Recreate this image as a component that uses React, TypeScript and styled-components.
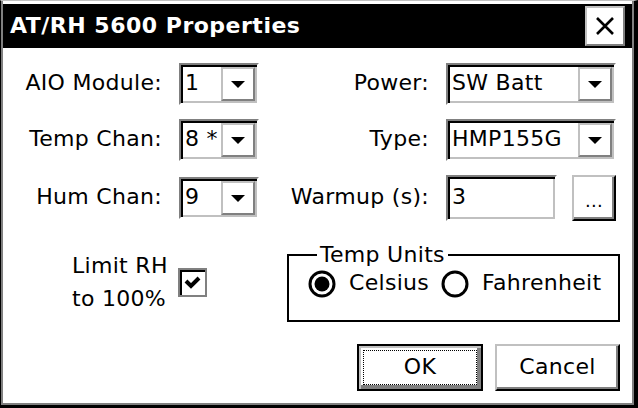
import React from "react";
import styled, {createGlobalStyle, css} from "styled-components";

const GRAY = "#808080";
const SILVER = "#c0c0c0";

const GlobalStyle = createGlobalStyle`
    html, body {
        margin: 0;
        padding: 0;
        background: #fff;
    }
    body {
        font-family: "DejaVu Sans", "Liberation Sans", sans-serif;
        font-size: 22px;
        letter-spacing: 0.3px;
        color: #000;
    }
    * {
        box-sizing: border-box;
    }
`;

const sunken = css`
    border: 2px solid;
    border-color: ${GRAY} #fff #fff ${GRAY};
    box-shadow: inset 2px 2px 0 #000, inset -2px -2px 0 ${SILVER};
`;

const raised = css`
    border: 2px solid;
    border-color: ${SILVER} #000 #000 ${SILVER};
    box-shadow: inset -2px -2px 0 ${GRAY};
    background: #fff;
`;

const Dialog = styled.div`
    width: 638px;
    height: 408px;
    display: flex;
    flex-direction: column;
    background: #fff;
    border-style: solid;
    border-width: 1px 4px 3px 1px;
    border-color: ${SILVER} #000 #000 #000;
    padding: 3px 2px 2px 2px;
    box-shadow: inset 2px 0 0 ${GRAY}, inset -2px 0 0 ${GRAY}, inset 0 -2px 0 ${GRAY};
`;

const TitleBar = styled.div`
    flex: none;
    height: 44px;
    background: #000;
    color: #fff;
    display: flex;
    align-items: center;
    justify-content: space-between;
    padding: 0 7px 0 7px;
`;

const Title = styled.span`
    font-weight: bold;
    font-size: 22px;
    letter-spacing: 0.5px;
    padding-bottom: 2px;
`;

const CloseButton = styled.div`
    width: 40px;
    height: 40px;
    background: #fff;
    border: 2px solid;
    border-color: ${SILVER} ${GRAY} ${GRAY} ${SILVER};
    display: flex;
    align-items: center;
    justify-content: center;
`;

const Body = styled.div`
    flex: 1;
    display: grid;
    grid-template-columns: 153px 80px 155px 170px;
    grid-template-rows: 42px 42px 46px 87px 55px;
    column-gap: 16px;
    row-gap: 14px;
    padding: 15px 16px 0 7px;
    align-items: center;
`;

const Label = styled.div`
    text-align: right;
    white-space: nowrap;
    padding-bottom: 3px;
    padding-right: 1px;
`;

const ComboBox = styled.div`
    ${sunken};
    height: 42px;
    display: flex;
    padding: 2px;
`;

const ComboText = styled.div`
    flex: 1;
    overflow: hidden;
    white-space: nowrap;
    display: flex;
    align-items: center;
    padding: 0 0 3px 2px;
`;

const DropButton = styled.div`
    flex: none;
    width: 34px;
    border: 2px solid;
    border-color: ${SILVER} ${GRAY} ${GRAY} ${SILVER};
    display: flex;
    align-items: center;
    justify-content: center;
`;

const Arrow = styled.div`
    width: 0;
    height: 0;
    border-left: 7px solid transparent;
    border-right: 7px solid transparent;
    border-top: 7px solid #000;
`;

const EditRow = styled.div`
    display: flex;
    justify-content: space-between;
    align-items: stretch;
    height: 46px;
`;

const EditBox = styled.div`
    ${sunken};
    width: 111px;
    display: flex;
    align-items: center;
    padding: 0 0 3px 4px;
`;

const DotsButton = styled.div`
    ${raised};
    width: 44px;
    display: flex;
    align-items: flex-end;
    justify-content: center;
    padding-bottom: 8px;
    font-size: 18px;
`;

const LimitCell = styled.div`
    grid-column: 1 / 3;
    align-self: start;
    display: flex;
    align-items: center;
    padding: 14px 0 0 62px;
    gap: 10px;
`;

const LimitText = styled.div`
    line-height: 33px;
    white-space: nowrap;
`;

const CheckBox = styled.div`
    width: 29px;
    height: 29px;
    border: 2px solid ${GRAY};
    box-shadow: inset 2px 2px 0 #000;
    display: flex;
    align-items: center;
    justify-content: center;
`;

const GroupBox = styled.fieldset`
    grid-column: 3 / 5;
    align-self: end;
    margin: 0 -4px 0 12px;
    height: 79px;
    border: 2px solid #000;
    padding: 3px 0 0 19px;
    min-width: 0;
`;

const GroupLegend = styled.legend`
    margin-left: 9px;
    padding: 0 3px;
    line-height: 24px;
`;

const RadioRow = styled.div`
    display: flex;
    align-items: center;
`;

const RadioLabel = styled.span`
    margin: 0 12px 0 13px;
    padding-bottom: 3px;
`;

const ButtonRow = styled.div`
    grid-column: 3 / 5;
    align-self: end;
    display: flex;
    justify-content: flex-end;
    gap: 12px;
    margin-right: -4px;
`;

const PushButton = styled.div<{ $default?: boolean }>`
    ${raised};
    width: ${(p) => (p.$default ? 126 : 125)}px;
    height: 47px;
    display: flex;
    align-items: center;
    justify-content: center;
    padding-bottom: 3px;
    ${(p) =>
        p.$default &&
        css`
            border-color: #000;
            box-shadow: inset 2px 2px 0 ${SILVER}, inset -4px -4px 0 ${GRAY};
            padding: 4px;
        `}
`;

const FocusRect = styled.div`
    width: 100%;
    height: 100%;
    border: 1px dotted #000;
    display: flex;
    align-items: center;
    justify-content: center;
    padding-bottom: 3px;
`;

const Combo: React.FC<{ value: string }> = ({value}) => (
    <ComboBox>
        <ComboText>{value}</ComboText>
        <DropButton>
            <Arrow/>
        </DropButton>
    </ComboBox>
);

const Radio: React.FC<{ checked?: boolean }> = ({checked}) => (
    <svg width="28" height="28" viewBox="0 0 28 28">
        <circle cx="14" cy="14" r="12" fill="#fff" stroke="#000" strokeWidth="3"/>
        {checked && <circle cx="14" cy="14" r="7.5" fill="#000"/>}
    </svg>
);

const App: React.FC = () => {
    return (
        <>
            <GlobalStyle/>
            <Dialog>
                <TitleBar>
                    <Title>AT/RH 5600 Properties</Title>
                    <CloseButton>
                        <svg width="18" height="18" viewBox="0 0 18 18">
                            <path d="M1 1L17 17M17 1L1 17" stroke="#000" strokeWidth="2.6"/>
                        </svg>
                    </CloseButton>
                </TitleBar>
                <Body>
                    <Label>AIO Module:</Label>
                    <Combo value="1"/>
                    <Label>Power:</Label>
                    <Combo value="SW Batt"/>

                    <Label>Temp Chan:</Label>
                    <Combo value="8 *"/>
                    <Label>Type:</Label>
                    <Combo value="HMP155G"/>

                    <Label>Hum Chan:</Label>
                    <Combo value="9"/>
                    <Label>Warmup (s):</Label>
                    <EditRow>
                        <EditBox>3</EditBox>
                        <DotsButton>...</DotsButton>
                    </EditRow>

                    <LimitCell>
                        <LimitText>Limit RH<br/>to 100%</LimitText>
                        <CheckBox>
                            <svg width="19" height="19" viewBox="0 0 19 19">
                                <path d="M3 8L8 13L16 5" fill="none" stroke="#000" strokeWidth="4"/>
                            </svg>
                        </CheckBox>
                    </LimitCell>
                    <GroupBox>
                        <GroupLegend>Temp Units</GroupLegend>
                        <RadioRow>
                            <Radio checked/>
                            <RadioLabel>Celsius</RadioLabel>
                            <Radio/>
                            <RadioLabel>Fahrenheit</RadioLabel>
                        </RadioRow>
                    </GroupBox>

                    <ButtonRow>
                        <PushButton $default>
                            <FocusRect>OK</FocusRect>
                        </PushButton>
                        <PushButton>Cancel</PushButton>
                    </ButtonRow>
                </Body>
            </Dialog>
        </>
    );
};

export default App;
